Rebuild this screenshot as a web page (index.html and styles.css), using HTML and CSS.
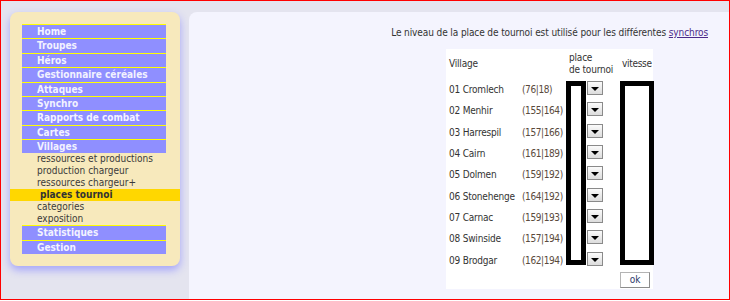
FILE: index.html
```html
<!DOCTYPE html>
<html lang="fr">
  <head>
    <meta charset="UTF-8" />
    <title>Places de tournoi</title>
    <link rel="stylesheet" href="styles.css">
  </head>
  <body>
    <div class="frame">
      <div class="side">
        <div class="menu">
          <a class="item" href="#">Home</a>
          <a class="item" href="#">Troupes</a>
          <a class="item" href="#">Héros</a>
          <a class="item" href="#">Gestionnaire céréales</a>
          <a class="item" href="#">Attaques</a>
          <a class="item" href="#">Synchro</a>
          <a class="item" href="#">Rapports de combat</a>
          <a class="item" href="#">Cartes</a>
          <a class="item" href="#">Villages</a>
          <a class="sub" href="#">ressources et productions</a>
          <a class="sub" href="#">production chargeur</a>
          <a class="sub" href="#">ressources chargeur+</a>
          <a class="sub current" href="#">places tournoi</a>
          <a class="sub" href="#">categories</a>
          <a class="sub" href="#">exposition</a>
          <a class="item" href="#">Statistiques</a>
          <a class="item" href="#">Gestion</a>
        </div>
      </div>

      <div class="content">
        <p class="note">Le niveau de la place de tournoi est utilisé pour les différentes <a href="#">synchros</a></p>

        <form class="places">
          <div class="head">Village</div>
          <div class="head"></div>
          <div class="head tournoi">place<br>de tournoi</div>
          <div class="head vit">vitesse</div>

          <div class="box tbox"></div>
          <div class="box vbox"></div>

          <div class="name">01 Cromlech</div><div class="coord">(76|18)</div><div class="pick r1"></div>
          <div class="name">02 Menhir</div><div class="coord">(155|164)</div><div class="pick r2"></div>
          <div class="name">03 Harrespil</div><div class="coord">(157|166)</div><div class="pick r3"></div>
          <div class="name">04 Cairn</div><div class="coord">(161|189)</div><div class="pick r4"></div>
          <div class="name">05 Dolmen</div><div class="coord">(159|192)</div><div class="pick r5"></div>
          <div class="name">06 Stonehenge</div><div class="coord">(164|192)</div><div class="pick r6"></div>
          <div class="name">07 Carnac</div><div class="coord">(159|193)</div><div class="pick r7"></div>
          <div class="name">08 Swinside</div><div class="coord">(157|194)</div><div class="pick r8"></div>
          <div class="name">09 Brodgar</div><div class="coord">(162|194)</div><div class="pick r9"></div>

          <button class="ok" type="button">ok</button>
        </form>
      </div>
    </div>
  </body>
</html>
```
FILE: styles.css
```css
*{
    margin: 0;
    padding: 0;
    box-sizing: border-box;
}
body{
    background: #ffffff;
    font-family: "DejaVu Sans Condensed", "DejaVu Sans", sans-serif;
    font-size: 10px;
    color: #333333;
}
.frame{
    width: 730px;
    height: 300px;
    border: 1px solid #ff0000;
    background-color: #e4e4ef;
    display: flex;
    overflow: hidden;
}

/* left menu */
.side{
    width: 188px;
    flex: none;
    padding: 11px 0 0 9px;
}
.menu{
    width: 170px;
    background-color: #f7e9bc;
    border-radius: 8px;
    box-shadow: 0 4px 8px #a4a4fa;
    padding: 12px 14px 12px 12px;
    display: flex;
    flex-direction: column;
}
.item{
    display: block;
    height: 14.375px;
    border-top: 1px solid #ffff00;
    background-color: #8f8fff;
    color: #f2f2ff;
    font-weight: bold;
    font-size: 10px;
    line-height: 13px;
    padding-left: 15px;
    text-decoration: none;
    white-space: nowrap;
}
.sub{
    display: block;
    height: 12px;
    line-height: 12px;
    padding-left: 15px;
    color: #3a3a3a;
    text-decoration: none;
    white-space: nowrap;
}
.sub.current{
    margin: 0 -14px 0 -12px;
    padding-left: 30px;
    background-color: #ffd700;
    font-weight: bold;
    color: #333333;
}

/* right panel */
.content{
    flex: 1;
    margin-top: 11px;
    background-color: #f4f4fe;
    border-top-left-radius: 8px;
    display: flex;
    flex-direction: column;
    align-items: flex-end;
    padding: 15px 21px 0 0;
}
.note{
    line-height: 12px;
    letter-spacing: -0.1px;
    color: #333333;
}
.note a{
    color: #4b2a8a;
}
.places{
    margin: 10px 55px 0 0;
    background-color: #ffffff;
    padding-left: 3px;
    display: grid;
    grid-template-columns: 73px 44px 21px 33px 33px;
    grid-template-rows: 30px repeat(9, 21.33px) 18px;
    width: 207px;
    letter-spacing: -0.2px;
}
.head{
    align-self: center;
    line-height: 12px;
}
.head.tournoi{
    grid-column: 3 / span 2;
    padding-left: 3px;
    white-space: nowrap;
}
.head.vit{
    padding-left: 2px;
    letter-spacing: -0.3px;
}
.name, .coord{
    align-self: center;
    white-space: nowrap;
}
.coord{
    color: #5a4a3c;
    letter-spacing: -0.4px;
}
.box{
    grid-row: 2 / 11;
    border: 5px solid #000000;
    background-color: #ffffff;
    margin: 2px 0 6px 0;
}
.tbox{
    grid-column: 3;
    width: 20px;
}
.vbox{
    grid-column: 5;
    width: 34px;
}
.pick{
    grid-column: 4;
    width: 16px;
    height: 14px;
    margin-top: 2px;
    border: 1px solid #8a8a8a;
    background: linear-gradient(#fbfbfb, #dcdcdc);
    display: flex;
    justify-content: center;
    align-items: flex-end;
    padding-bottom: 3px;
}
.pick::after{
    content: "";
    border-left: 4px solid transparent;
    border-right: 4px solid transparent;
    border-top: 4px solid #000000;
}
.r1{ grid-row: 2; }
.r2{ grid-row: 3; }
.r3{ grid-row: 4; }
.r4{ grid-row: 5; }
.r5{ grid-row: 6; }
.r6{ grid-row: 7; }
.r7{ grid-row: 8; }
.r8{ grid-row: 9; }
.r9{ grid-row: 10; }
.ok{
    grid-column: 5;
    grid-row: 11;
    width: 30px;
    height: 16px;
    margin-top: 1px;
    background-color: #ffffff;
    border: 1px solid #b4b4b4;
    border-right-color: #8c8c8c;
    border-bottom-color: #8c8c8c;
    font-family: "DejaVu Sans Condensed", "DejaVu Sans", sans-serif;
    font-size: 10px;
    color: #2b3a6a;
}
```
